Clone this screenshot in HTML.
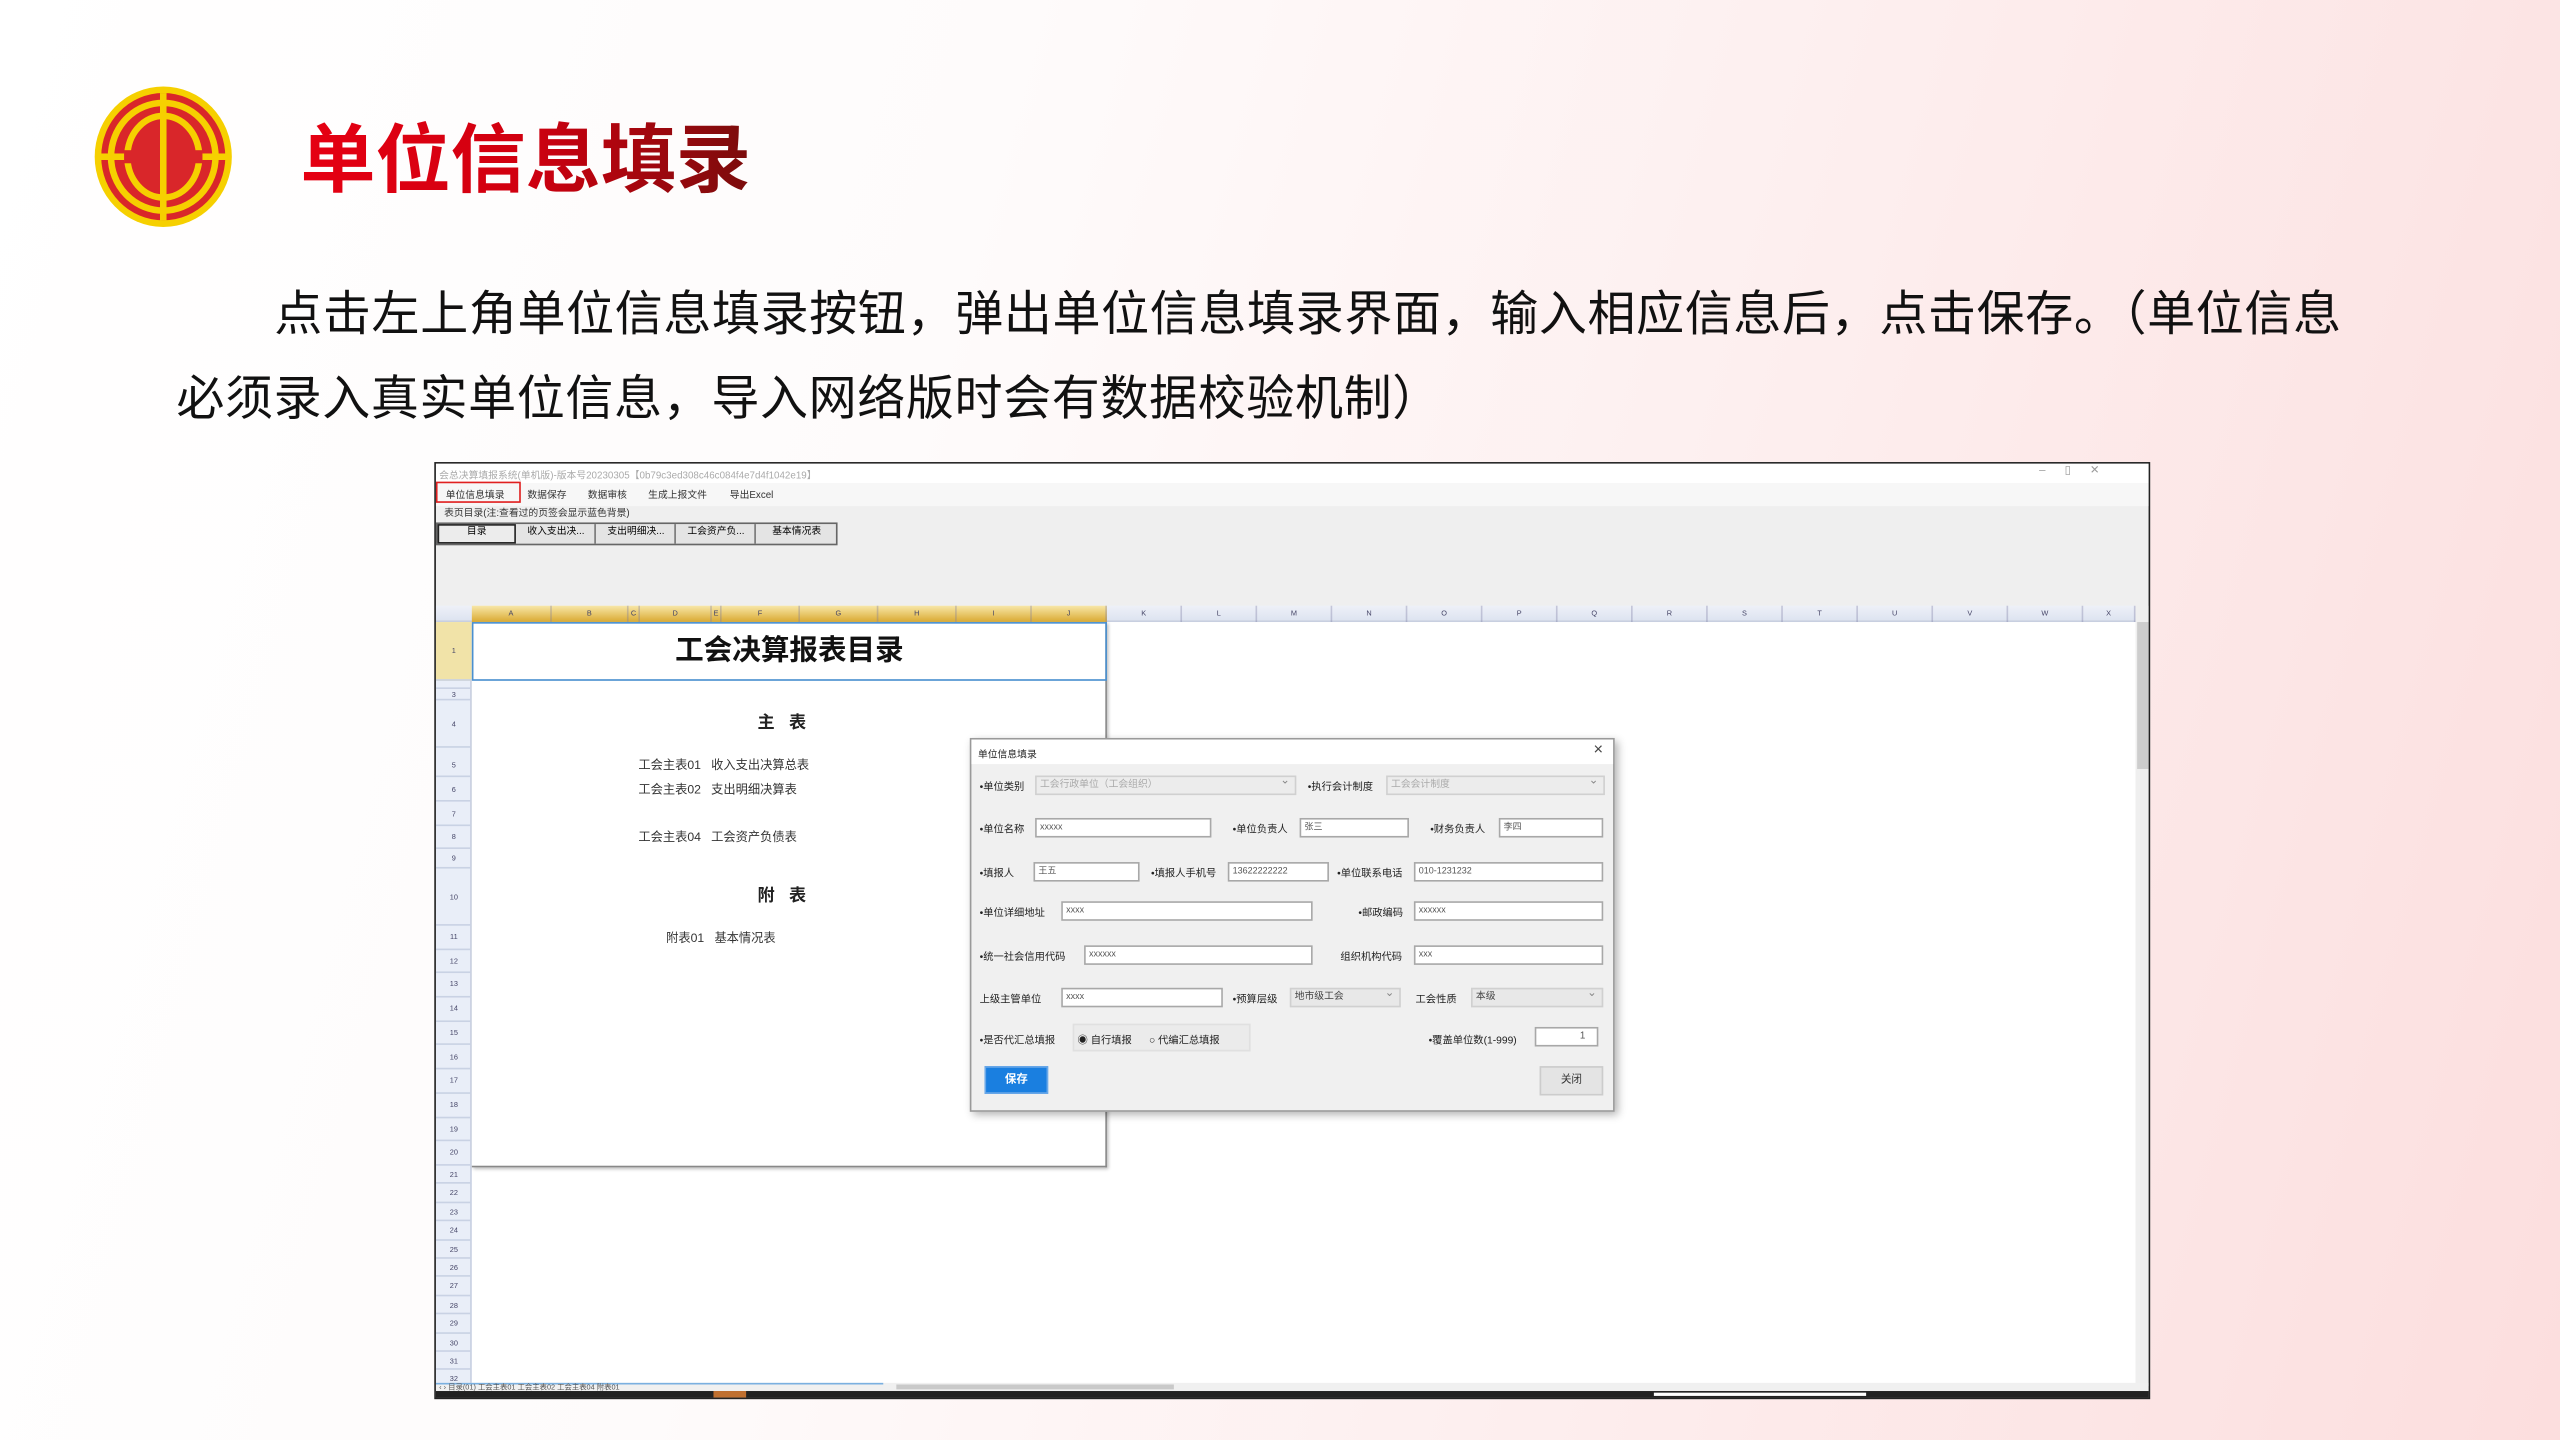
<!DOCTYPE html>
<html><head><meta charset="utf-8"><style>
*{margin:0;padding:0;box-sizing:border-box}
html,body{width:2560px;height:1440px;overflow:hidden}
body{background:linear-gradient(105deg,#ffffff 0%,#fefbfb 35%,#fdeeee 65%,#fcdede 100%);font-family:"Liberation Sans","Noto Sans CJK SC",sans-serif}
#st{position:absolute;left:0;top:0;width:1568px;height:882px;transform:scale(1.632653);transform-origin:0 0}
.a{position:absolute;white-space:nowrap}
.t7{font-size:6.5px;color:#333}
.inp{position:absolute;height:12px;background:#fff;border:1px solid #a8a8a8;font-size:5.5px;line-height:10px;padding-left:2px;color:#555}
.cmb{position:absolute;height:12px;background:#e6e6e6;border:1px solid #d0d0d0;font-size:6px;line-height:10px;padding-left:2px;color:#444}
.cmb.g{color:#aaa;background:#ececec}
.cmb:after{content:"⌄";position:absolute;right:3px;top:-2px;font-size:7px;color:#888}
.lb{position:absolute;font-size:6.3px;color:#222;white-space:nowrap}
</style></head><body><div id="st">

<svg class="a" style="left:56px;top:52px" width="88" height="88" viewBox="0 0 88 88">
<ellipse cx="44" cy="44" rx="42" ry="43" fill="#f6d000"/>
<ellipse cx="44" cy="44" rx="38" ry="39" fill="#d9262a"/>
<ellipse cx="44" cy="44" rx="32" ry="33" fill="none" stroke="#f6d000" stroke-width="4"/>
<ellipse cx="44" cy="44" rx="22" ry="25" fill="none" stroke="#f6d000" stroke-width="4"/>
<rect x="42" y="5" width="4" height="78" fill="#f6d000"/>
<rect x="5" y="42" width="16" height="4" fill="#f6d000"/>
<rect x="67" y="42" width="16" height="4" fill="#f6d000"/>
<rect x="20" y="40" width="6" height="8" fill="#d9262a"/>
<rect x="62" y="40" width="6" height="8" fill="#d9262a"/>
</svg>

<div class="a" style="left:184px;top:70px;font-size:46px;font-weight:bold;line-height:56px;background:linear-gradient(90deg,#e60012 0%,#d00010 50%,#7a0c0c 100%);-webkit-background-clip:text;background-clip:text;color:transparent">单位信息填录</div>

<div class="a" style="left:168px;top:175px;font-size:29.4px;line-height:36px;color:#111;letter-spacing:0.4px">点击左上角单位信息填录按钮，弹出单位信息填录界面，输入相应信息后，点击保存。（单位信息</div>
<div class="a" style="left:108px;top:227px;font-size:29.4px;line-height:36px;color:#111;letter-spacing:0.4px">必须录入真实单位信息，导入网络版时会有数据校验机制）</div>

<div class="a" style="left:266px;top:283px;width:1051px;height:574px;border:1px solid #222;background:#efefef;overflow:hidden">
 <div class="a" style="left:0;top:0;width:1050px;height:12px;background:#fff"></div>
 <div class="a" style="left:2px;top:2px;font-size:6px;color:#aaa">会总决算填报系统(单机版)-版本号20230305【0b79c3ed308c46c084f4e7d4f1042e19】</div>
 <div class="a" style="left:982px;top:0px;font-size:7px;color:#999">–&nbsp;&nbsp;&nbsp;&nbsp;&nbsp;&nbsp;▯&nbsp;&nbsp;&nbsp;&nbsp;&nbsp;&nbsp;✕</div>
 <div class="a" style="left:0;top:12px;width:1050px;height:14px;background:#f7f7f7"></div>
 <div class="a" style="left:0;top:11px;width:52px;height:13px;border:1.5px solid #e02020"></div>
 <div class="a t7" style="left:6px;top:14px;font-size:6px">单位信息填录</div>
 <div class="a t7" style="left:56px;top:14px;font-size:6px">数据保存</div>
 <div class="a t7" style="left:93px;top:14px;font-size:6px">数据审核</div>
 <div class="a t7" style="left:130px;top:14px;font-size:6px">生成上报文件</div>
 <div class="a t7" style="left:180px;top:14px;font-size:6px">导出Excel</div>
 <div class="a t7" style="left:5px;top:25px;font-size:6px">表页目录(注:查看过的页签会显示蓝色背景)</div>
 <div class="a" style="left:0;top:36px;width:246px;height:14px;background:#e4e4e4;border:1px solid #666"></div>
 <div class="a" style="left:1px;top:37px;width:48px;height:12px;border:1.5px solid #222;background:#ececec;font-size:6px;text-align:center;line-height:9px">目录</div>
 <div class="a" style="left:50px;top:37px;width:48px;height:12px;border-right:1px solid #777;font-size:6px;text-align:center;line-height:10px">收入支出决...</div>
 <div class="a" style="left:99px;top:37px;width:48px;height:12px;border-right:1px solid #777;font-size:6px;text-align:center;line-height:10px">支出明细决...</div>
 <div class="a" style="left:148px;top:37px;width:48px;height:12px;border-right:1px solid #777;font-size:6px;text-align:center;line-height:10px">工会资产负...</div>
 <div class="a" style="left:197px;top:37px;width:48px;height:12px;font-size:6px;text-align:center;line-height:10px">基本情况表</div>

 <div class="a" style="left:0;top:87px;width:1041px;height:10px;background:linear-gradient(#eef1f8,#dde3f0);border-bottom:1px solid #c8cfe0"></div>
 <div class="a" style="left:22px;top:87px;width:389px;height:10px;background:linear-gradient(#f8e7a8,#d9a930)"></div>
 <div id="cols"></div>
 <div class="a" style="left:0;top:97px;width:22px;height:470px;background:#e9eef8;border-right:1px solid #c5cde0"></div>
 <div class="a" style="left:0;top:97px;width:22px;height:36px;background:#f1e3a8"></div>
 <div id="rows"></div>
 <div class="a" style="left:22px;top:97px;width:1019px;height:470px;background:#fff"></div>
 <div class="a" style="left:22px;top:97px;width:389px;height:334px;background:#fff;border-right:1px solid #888;border-bottom:1px solid #888;box-shadow:1px 1px 2px #bbb"></div>
 <div class="a" style="left:22px;top:97px;width:389px;height:36px;border:1.5px solid #4a90d0;font-size:17.5px;font-weight:bold;text-align:center;line-height:32px;color:#111">工会决算报表目录</div>
 <div class="a" style="left:197px;top:151px;font-size:10.5px;font-weight:bold;color:#222">主&nbsp;&nbsp;&nbsp;表</div>
 <div class="a" style="left:124px;top:179px;font-size:7.5px;color:#333">工会主表01&nbsp;&nbsp;&nbsp;收入支出决算总表</div>
 <div class="a" style="left:124px;top:194px;font-size:7.5px;color:#333">工会主表02&nbsp;&nbsp;&nbsp;支出明细决算表</div>
 <div class="a" style="left:124px;top:223px;font-size:7.5px;color:#333">工会主表04&nbsp;&nbsp;&nbsp;工会资产负债表</div>
 <div class="a" style="left:197px;top:257px;font-size:10.5px;font-weight:bold;color:#222">附&nbsp;&nbsp;&nbsp;表</div>
 <div class="a" style="left:141px;top:285px;font-size:7.5px;color:#333">附表01&nbsp;&nbsp;&nbsp;基本情况表</div>
 <div class="a" style="left:1041px;top:87px;width:9px;height:478px;background:#efefef"></div>
 <div class="a" style="left:1042px;top:97px;width:7px;height:90px;background:#cdcdcd"></div>
 <div class="a" style="left:0;top:563px;width:1050px;height:5px;background:#f0f0f0"></div>
 <div class="a" style="left:0;top:563px;width:274px;height:1px;background:#7ab0e0"></div>
 <div class="a" style="left:2px;top:563px;font-size:4.5px;color:#555">‹ › 目录(01) 工会主表01 工会主表02 工会主表04 附表01</div>
 <div class="a" style="left:282px;top:564px;width:170px;height:3px;background:#c9c9c9"></div>
 <div class="a" style="left:0;top:568px;width:1050px;height:6px;background:#222"></div>
 <div class="a" style="left:170px;top:568px;width:20px;height:6px;background:#c07030"></div>
 <div class="a" style="left:746px;top:569px;width:130px;height:2px;background:#fff"></div>
</div>

<div class="a" style="left:594px;top:452px;width:395px;height:229px;background:#f0f0f0;border:1px solid #9a9a9a;box-shadow:2px 2px 5px rgba(0,0,0,.3)">
 <div class="a" style="left:0;top:0;width:393px;height:15px;background:#fff"></div>
 <div class="lb" style="left:4px;top:4px;font-size:6px">单位信息填录</div>
 <div class="lb" style="left:381px;top:1px;font-size:10px;color:#444">×</div>

 <div class="lb" style="left:5px;top:24px">•单位类别</div><div class="cmb g" style="left:39px;top:22px;width:160px">工会行政单位（工会组织）</div>
 <div class="lb" style="left:206px;top:24px">•执行会计制度</div><div class="cmb g" style="left:254px;top:22px;width:134px">工会会计制度</div>

 <div class="lb" style="left:5px;top:50px">•单位名称</div><div class="inp" style="left:39px;top:48px;width:108px">xxxxx</div>
 <div class="lb" style="left:160px;top:50px">•单位负责人</div><div class="inp" style="left:201px;top:48px;width:67px">张三</div>
 <div class="lb" style="left:281px;top:50px">•财务负责人</div><div class="inp" style="left:323px;top:48px;width:64px">李四</div>

 <div class="lb" style="left:5px;top:77px">•填报人</div><div class="inp" style="left:38px;top:75px;width:65px">王五</div>
 <div class="lb" style="left:110px;top:77px">•填报人手机号</div><div class="inp" style="left:157px;top:75px;width:62px">13622222222</div>
 <div class="lb" style="left:224px;top:77px">•单位联系电话</div><div class="inp" style="left:271px;top:75px;width:116px">010-1231232</div>

 <div class="lb" style="left:5px;top:101px">•单位详细地址</div><div class="inp" style="left:55px;top:99px;width:154px">xxxx</div>
 <div class="lb" style="left:237px;top:101px">•邮政编码</div><div class="inp" style="left:271px;top:99px;width:116px">xxxxxx</div>

 <div class="lb" style="left:5px;top:128px">•统一社会信用代码</div><div class="inp" style="left:69px;top:126px;width:140px">xxxxxx</div>
 <div class="lb" style="left:226px;top:128px">组织机构代码</div><div class="inp" style="left:271px;top:126px;width:116px">xxx</div>

 <div class="lb" style="left:5px;top:154px">上级主管单位</div><div class="inp" style="left:55px;top:152px;width:99px">xxxx</div>
 <div class="lb" style="left:160px;top:154px">•预算层级</div><div class="cmb" style="left:195px;top:152px;width:68px;background:#e8e8e8">地市级工会</div>
 <div class="lb" style="left:272px;top:154px">工会性质</div><div class="cmb" style="left:306px;top:152px;width:81px;background:#e8e8e8">本级</div>

 <div class="lb" style="left:5px;top:179px">•是否代汇总填报</div>
 <div class="a" style="left:62px;top:174px;width:109px;height:17px;background:#ebebeb;border:1px solid #e0e0e0"></div>
 <div class="lb" style="left:65px;top:179px">◉ 自行填报&nbsp;&nbsp;&nbsp;&nbsp;&nbsp;&nbsp;○ 代编汇总填报</div>
 <div class="lb" style="left:280px;top:179px">•覆盖单位数(1-999)</div>
 <div class="inp" style="left:345px;top:176px;width:39px;text-align:right;padding-right:7px;font-size:6px">1</div>

 <div class="a" style="left:8px;top:200px;width:39px;height:17px;background:#1a7fe0;border:1px solid #6aa8e8;color:#fff;font-size:7px;font-weight:bold;text-align:center;line-height:15px">保存</div>
 <div class="a" style="left:348px;top:200px;width:39px;height:18px;background:#e4e4e4;border:1px solid #ccc;color:#333;font-size:6.5px;text-align:center;line-height:16px">关闭</div>
</div>

</div>
<script>
(function(){
 var c=document.getElementById('cols'),h='';
 var b=[[22,'A',71],[71,'B',118],[118,'C',125],[125,'D',169],[169,'E',175],[175,'F',223],[223,'G',271],[271,'H',319],[319,'I',365],[365,'J',411]];
 var L='KLMNOPQRSTUVWX';
 for(var i=0;i<14;i++){var s=411+i*46;b.push([s,L[i],Math.min(s+46,1041)]);}
 b.forEach(function(x){h+='<div class="a" style="left:'+x[0]+'px;top:87px;width:'+(x[2]-x[0])+'px;height:10px;border-right:1px solid rgba(120,120,160,.35);font-size:4.5px;text-align:center;line-height:10px;color:#446">'+x[1]+'</div>';});
 c.innerHTML=h;
 var r=document.getElementById('rows'),g='';
 var rs=[[97,36],[133,5],[138,7],[145,29],[177,15],[192,15],[207,15],[222,14],[236,12],[248,35]];
 var y=283;for(var k=11;k<=20;k++){rs.push([y,14.7]);y+=14.7;}
 for(var k=21;k<=32;k++){rs.push([y,11.4]);y+=11.4;}
 rs.forEach(function(x,i){g+='<div class="a" style="left:0;top:'+x[0]+'px;width:22px;height:'+x[1]+'px;border-bottom:1px solid #c9d2e4;font-size:4.5px;text-align:center;line-height:'+x[1]+'px;color:#446">'+(x[1]>6?(i+1):'')+'</div>';});
 r.innerHTML=g;
})();
</script>
</body></html>
